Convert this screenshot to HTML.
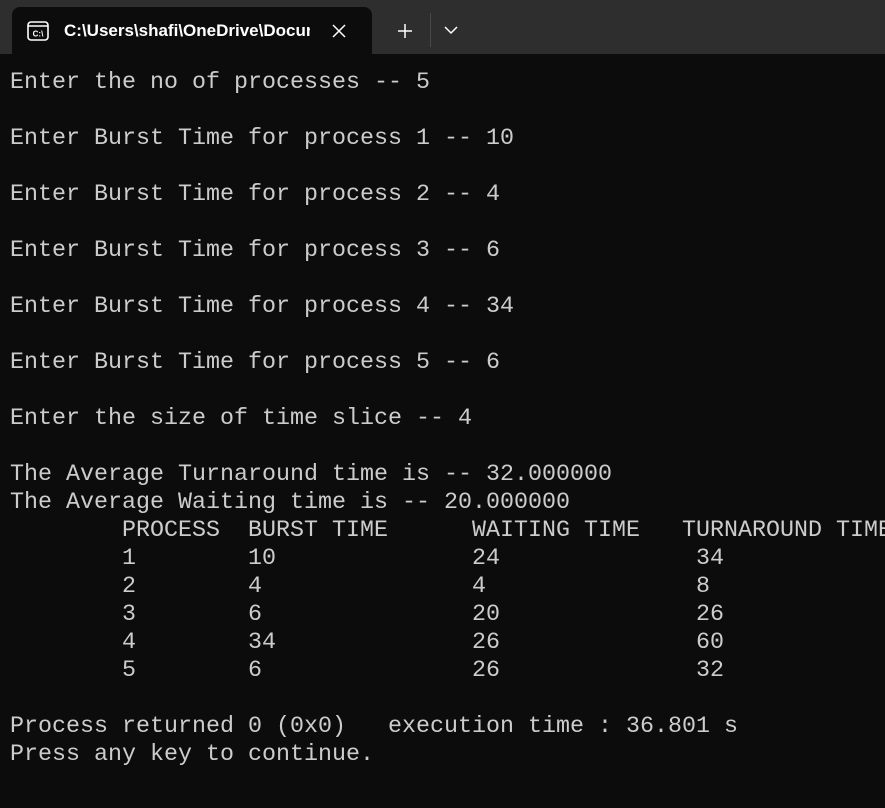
<!DOCTYPE html>
<html><head><meta charset="utf-8"><style>
html,body{margin:0;padding:0;}
body{width:885px;height:808px;background:#0c0c0c;overflow:hidden;position:relative;}
.bar{position:absolute;left:0;top:0;width:885px;height:54px;background:#2e2e2e;}
.tab{position:absolute;left:12px;top:7px;width:360px;height:47px;background:#0c0c0c;border-radius:8px 8px 0 0;}
.title{position:absolute;left:64px;top:21px;width:246px;overflow:hidden;white-space:nowrap;color:#fff;font:bold 17px "Liberation Sans",sans-serif;}
pre{position:absolute;left:10px;top:69px;margin:0;color:#cccccc;font-family:"Liberation Mono",monospace;font-size:23.33px;line-height:28px;}
</style></head><body>
<div class="bar">
<div class="tab">
<svg style="position:absolute;left:15px;top:14px" width="22" height="20" viewBox="0 0 22 20"><rect x="1" y="1" width="20" height="18" rx="3" fill="none" stroke="#fff" stroke-width="1.6"/><line x1="1" y1="5" x2="21" y2="5" stroke="#fff" stroke-width="1.4"/><text x="11" y="15.5" fill="#fff" font-family="Liberation Sans" font-size="8" font-weight="bold" text-anchor="middle">C:\</text></svg>
<svg style="position:absolute;left:320px;top:17px" width="14" height="14" viewBox="0 0 14 14"><path d="M1 1L13 13M13 1L1 13" stroke="#fff" stroke-width="1.5"/></svg>
</div>
<div class="title">C:\Users\shafi\OneDrive\Documents</div>
<svg style="position:absolute;left:397px;top:23px" width="16" height="16" viewBox="0 0 16 16"><path d="M8 1V15M1 8H15" stroke="#fff" stroke-width="1.5"/></svg>
<div style="position:absolute;left:430px;top:13px;width:1px;height:34px;background:#4a4a4a"></div>
<svg style="position:absolute;left:444px;top:26px" width="14" height="9" viewBox="0 0 14 9"><path d="M1 1L7 7L13 1" fill="none" stroke="#fff" stroke-width="1.5"/></svg>
</div>
<pre>Enter the no of processes -- 5

Enter Burst Time for process 1 -- 10

Enter Burst Time for process 2 -- 4

Enter Burst Time for process 3 -- 6

Enter Burst Time for process 4 -- 34

Enter Burst Time for process 5 -- 6

Enter the size of time slice -- 4

The Average Turnaround time is -- 32.000000
The Average Waiting time is -- 20.000000
        PROCESS  BURST TIME      WAITING TIME   TURNAROUND TIME
        1        10              24              34
        2        4               4               8
        3        6               20              26
        4        34              26              60
        5        6               26              32

Process returned 0 (0x0)   execution time : 36.801 s
Press any key to continue.</pre>
</body></html>
